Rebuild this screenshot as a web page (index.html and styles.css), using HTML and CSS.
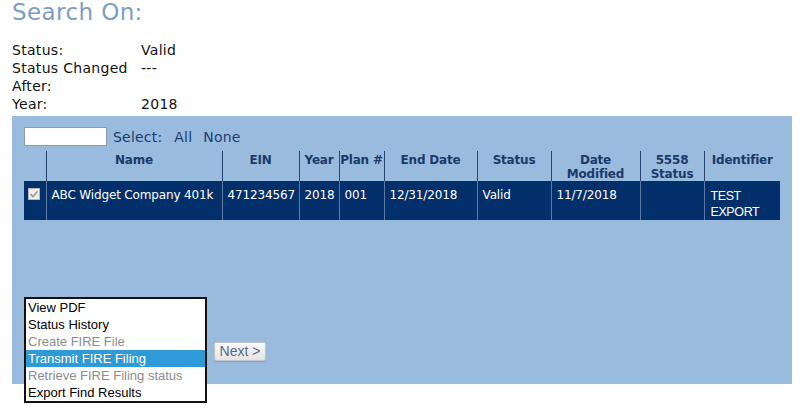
FILE: index.html
```html
<!DOCTYPE html>
<html>
<head>
<meta charset="utf-8">
<link rel="stylesheet" href="styles.css">
</head>
<body>
<div class="page">
  <h1 class="title">Search On:</h1>
  <div class="criteria">
    <div class="label">Status:</div><div class="value">Valid</div>
    <div class="label">Status Changed After:</div><div class="value">---</div>
    <div class="label">Year:</div><div class="value">2018</div>
  </div>
  <div class="panel">
    <div class="toolbar">
      <span class="search-box"></span>
      <span class="select-label">Select:</span>
      <span class="select-link">All</span>
      <span class="select-link">None</span>
    </div>
    <table class="results">
      <colgroup>
        <col style="width:22px"><col style="width:176px"><col style="width:77px"><col style="width:40px"><col style="width:45px"><col style="width:93px"><col style="width:74px"><col style="width:89px"><col style="width:64px"><col style="width:76px">
      </colgroup>
      <thead>
        <tr>
          <th class="chk-col"></th>
          <th>Name</th>
          <th>EIN</th>
          <th>Year</th>
          <th>Plan #</th>
          <th>End Date</th>
          <th>Status</th>
          <th>Date Modified</th>
          <th>5558 Status</th>
          <th>Identifier</th>
        </tr>
      </thead>
      <tbody>
        <tr class="selected">
          <td class="chk-col"><span class="checkbox"><svg viewBox="0 0 12 12" width="12" height="12"><path d="M2.5 6.2 L5 8.6 L9.6 3.2" fill="none" stroke="#9a9a9a" stroke-width="1.6"/></svg></span></td>
          <td>ABC Widget Company 401k</td>
          <td>471234567</td>
          <td>2018</td>
          <td>001</td>
          <td>12/31/2018</td>
          <td>Valid</td>
          <td>11/7/2018</td>
          <td></td>
          <td class="ident">TEST EXPORT</td>
        </tr>
      </tbody>
    </table>
    <div class="actions">
      <div class="listbox">
        <div class="opt">View PDF</div>
        <div class="opt">Status History</div>
        <div class="opt disabled">Create FIRE File</div>
        <div class="opt active">Transmit FIRE Filing</div>
        <div class="opt disabled">Retrieve FIRE Filing status</div>
        <div class="opt">Export Find Results</div>
      </div>
      <button class="next-btn">Next &gt;</button>
    </div>
  </div>
</div>
</body>
</html>
```

FILE: styles.css
```css
html, body {
  margin: 0;
  padding: 0;
  background: #ffffff;
}
body {
  min-height: 412px;
}
.page {
  padding: 0 12px 30px 12px;
  font-family: "DejaVu Sans", Verdana, sans-serif;
  color: #111111;
}
.title {
  margin: 0 0 17px 0;
  font-size: 23px;
  line-height: 24px;
  font-weight: normal;
  letter-spacing: 0.4px;
  color: #7a9cc8;
}
.criteria {
  display: grid;
  grid-template-columns: 129px 1fr;
  font-size: 14px;
  line-height: 18px;
  letter-spacing: 0.3px;
}
.criteria .label {
  width: 120px;
}
.panel {
  margin-top: 3px;
  height: 268px;
  background: #99bbdd;
  padding: 11px 10px 0 12px;
  box-sizing: border-box;
}
.toolbar {
  display: flex;
  align-items: center;
  height: 19px;
  font-size: 14px;
  letter-spacing: 0.2px;
  color: #1d3c72;
}
.search-box {
  width: 83px;
  height: 19px;
  box-sizing: border-box;
  background: #ffffff;
  border: 1px solid #8f9aa6;
  margin-right: 6px;
}
.select-label {
  margin-right: 12px;
}
.select-link {
  margin-right: 11px;
}
.results {
  margin-top: 5px;
  border-collapse: collapse;
  table-layout: fixed;
  width: 756px;
}
.results th {
  font-size: 12px;
  line-height: 14px;
  font-weight: bold;
  color: #1b3a6a;
  text-align: center;
  vertical-align: top;
  padding: 2px 0 0 0;
  height: 26px;
  border-left: 1px solid #2a4670;
  letter-spacing: -0.2px;
}
.results th.chk-col {
  border-left: none;
}
.results td {
  font-size: 12px;
  line-height: 15px;
  color: #ffffff;
  vertical-align: top;
  padding: 7px 0 0 5px;
  height: 32px;
  border-left: 1px solid #5d7ba2;
  white-space: nowrap;
  overflow: hidden;
  letter-spacing: -0.15px;
}
.results td.chk-col {
  border-left: none;
  padding: 7px 0 0 4px;
}
.results td.ident {
  white-space: normal;
  font-family: "Liberation Sans", Arial, sans-serif;
  font-size: 12.5px;
  line-height: 16px;
  letter-spacing: -0.4px;
  padding-left: 6px;
}
.selected {
  background: #03306a;
}
.checkbox {
  display: block;
  width: 12px;
  height: 12px;
  background: #ececec;
  border: 1px solid #b5b5b5;
  box-sizing: border-box;
  position: relative;
}
.checkbox svg {
  position: absolute;
  left: -1px;
  top: -1px;
}
.actions {
  margin-top: 77px;
  display: flex;
  align-items: center;
  gap: 7px;
}
.listbox {
  width: 183px;
  box-sizing: border-box;
  border: 2px solid #111111;
  background: #ffffff;
  font-family: "Liberation Sans", Arial, sans-serif;
  font-size: 13px;
}
.opt {
  height: 17px;
  line-height: 17px;
  padding-left: 2px;
  color: #000000;
  white-space: nowrap;
}
.opt.disabled {
  color: #8c8c8c;
}
.opt.active {
  background: #2e9ad7;
  color: #ffffff;
}
.next-btn {
  margin: 3px 0 0 0;
  width: 52px;
  height: 19px;
  padding: 0;
  font-family: "Liberation Sans", Arial, sans-serif;
  font-size: 14px;
  line-height: 17px;
  color: #56698a;
  background: linear-gradient(#fafafa, #e4e4e4);
  border: 1px solid #c2c6cc;
  border-radius: 2px;
  box-shadow: 0 1px 1px rgba(0,0,0,0.15);
}
```
